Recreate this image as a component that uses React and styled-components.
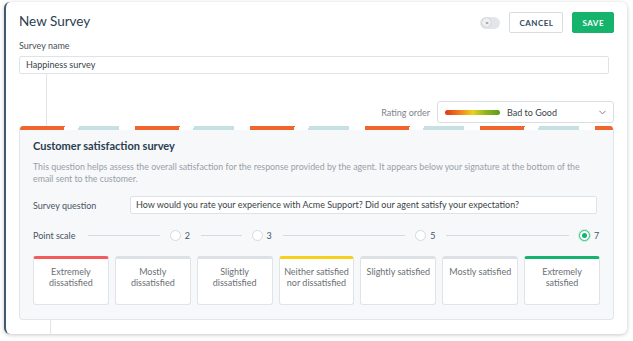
import React from 'react';
import styled, { createGlobalStyle } from 'styled-components';

const GlobalStyle = createGlobalStyle`
    body {
        margin: 0;
        background: #fff;
        font-family: Lato, "Open Sans", sans-serif;
    }
`;

const scale = [
    { label: 'Extremely dissatisfied', color: '#f45b5b' },
    { label: 'Mostly dissatisfied', color: '#dde1e6' },
    { label: 'Slightly dissatisfied', color: '#dde1e6' },
    { label: 'Neither satisfied nor dissatisfied', color: '#f7cf1d' },
    { label: 'Slightly satisfied', color: '#dde1e6' },
    { label: 'Mostly satisfied', color: '#dde1e6' },
    { label: 'Extremely satisfied', color: '#14b46e' },
];

const points = [
    { value: 2, span: 2, withLabel: true },
    { value: 3, span: 1 },
    { value: 5, span: 2 },
    { value: 7, span: 2, checked: true },
];

function App() {
    return (
        <Page>
            <GlobalStyle />
            <Panel>
                <Header>
                    <Title>New Survey</Title>
                    <Actions>
                        <Toggle>
                            <Knob>×</Knob>
                        </Toggle>
                        <Button>CANCEL</Button>
                        <Button primary>SAVE</Button>
                    </Actions>
                </Header>

                <FieldLabel>Survey name</FieldLabel>
                <NameInput>Happiness survey</NameInput>

                <Branch>
                    <RatingLabel>Rating order</RatingLabel>
                    <Select>
                        <GradientBar />
                        <SelectText>Bad to Good</SelectText>
                        <Chevron viewBox="0 0 10 6">
                            <path d="M1 1l4 4 4-4" fill="none" stroke="#6b7785" strokeWidth="1.3" strokeLinecap="round" strokeLinejoin="round" />
                        </Chevron>
                    </Select>
                </Branch>

                <Card>
                    <Stripes />
                    <CardBody>
                        <CardTitle>Customer satisfaction survey</CardTitle>
                        <Description>
                            This question helps assess the overall satisfaction for the response provided by the agent. It appears below your signature at the bottom of the email sent to the customer.
                        </Description>

                        <QuestionRow>
                            <RowLabel>Survey question</RowLabel>
                            <QuestionInput>How would you rate your experience with Acme Support? Did our agent satisfy your expectation?</QuestionInput>
                        </QuestionRow>

                        <ScaleGrid>
                            {points.map((p) => (
                                <ScaleCell key={p.value} span={p.span}>
                                    {p.withLabel && <RowLabel>Point scale</RowLabel>}
                                    <Line first={p.withLabel} />
                                    <Radio checked={p.checked} />
                                    <PointNum>{p.value}</PointNum>
                                </ScaleCell>
                            ))}
                        </ScaleGrid>

                        <OptionGrid>
                            {scale.map((s) => (
                                <Option key={s.label} accent={s.color}>{s.label}</Option>
                            ))}
                        </OptionGrid>
                    </CardBody>
                </Card>

                <BottomBranch />
            </Panel>
        </Page>
    );
}

const Page = styled.div`
    padding: 2px 6px 7px 4px;
`;

const Panel = styled.div`
    height: 332px;
    box-sizing: border-box;
    background: #fff;
    border-radius: 6px;
    border-left: 2px solid #40596f;
    box-shadow: 0 1px 4px rgba(0, 0, 0, 0.22);
    padding: 10px 13px 0 13px;
    overflow: hidden;
`;

const Header = styled.div`
    display: flex;
    justify-content: space-between;
    align-items: flex-start;
    height: 28px;
`;

const Title = styled.h1`
    margin: 1px 0 0;
    font-size: 13.5px;
    font-weight: 400;
    color: #2b3d50;
    line-height: 17px;
`;

const Actions = styled.div`
    display: flex;
    align-items: center;
`;

const Toggle = styled.div`
    width: 20px;
    height: 12px;
    border-radius: 6px;
    background: #e2e5e9;
    display: flex;
    align-items: center;
    padding-left: 2px;
    box-sizing: border-box;
    margin-right: 9px;
`;

const Knob = styled.div`
    width: 9px;
    height: 9px;
    border-radius: 50%;
    background: #eef0f2;
    box-shadow: 0 0 1px rgba(0, 0, 0, 0.35);
    font-size: 6px;
    line-height: 9px;
    text-align: center;
    color: #555;
`;

const Button = styled.button`
    height: 21px;
    padding: 0 9px;
    margin-left: ${(p) => (p.primary ? '9px' : '0')};
    border: 1px solid ${(p) => (p.primary ? '#15b36c' : '#d7dce1')};
    border-radius: 2px;
    background: ${(p) => (p.primary ? '#15b36c' : '#fff')};
    color: ${(p) => (p.primary ? '#fff' : '#34495e')};
    font-family: Lato, sans-serif;
    font-size: 8px;
    font-weight: 700;
    letter-spacing: 0.5px;
`;

const FieldLabel = styled.div`
    font-size: 9px;
    color: #4a4f55;
    line-height: 12px;
`;

const NameInput = styled.div`
    margin-top: 4px;
    margin-right: 5px;
    height: 18px;
    box-sizing: border-box;
    border: 1px solid #dfe3e7;
    border-radius: 2px;
    padding: 0 6px;
    font-size: 9px;
    line-height: 16px;
    color: #3a3f45;
`;

const Branch = styled.div`
    margin-left: 27px;
    border-left: 1px solid #e1e4e8;
    padding: 27px 0 3px;
    display: flex;
    justify-content: flex-end;
    align-items: center;
`;

const RatingLabel = styled.span`
    font-size: 9px;
    color: #80858b;
    margin-right: 7px;
`;

const Select = styled.div`
    width: 177px;
    height: 22px;
    box-sizing: border-box;
    border: 1px solid #d9dee3;
    border-radius: 3px;
    display: flex;
    align-items: center;
    padding: 0 7px;
`;

const GradientBar = styled.div`
    width: 55px;
    height: 5px;
    border-radius: 3px;
    background: linear-gradient(90deg, #e2361a 0%, #f08a1c 30%, #ecd21c 50%, #8cb41e 75%, #5a9c1a 100%);
`;

const SelectText = styled.span`
    font-size: 9px;
    color: #3a3f45;
    margin-left: 7px;
    flex: 1;
`;

const Chevron = styled.svg`
    width: 7px;
    height: 5px;
`;

const Card = styled.div`
    border: 1px solid #e2e6ea;
    border-top: none;
    border-radius: 4px;
    background: #f6f8fa;
    overflow: hidden;
`;

const Stripes = styled.div`
    height: 4px;
    background-image: linear-gradient(100deg, #f0652d 0, #f0652d 44px, #fff 44px, #fff 58px, #c6e0e3 58px, #c6e0e3 98px, #fff 98px, #fff 115px);
    background-size: 115px 4px;
    background-repeat: repeat-x;
`;

const CardBody = styled.div`
    padding: 8px 13px 14px;
`;

const CardTitle = styled.h2`
    margin: 0;
    font-size: 11px;
    font-weight: 700;
    color: #2b3d50;
    line-height: 16px;
`;

const Description = styled.p`
    margin: 7px 0 0;
    font-size: 8.8px;
    line-height: 11.5px;
    color: #9aa0a6;
`;

const QuestionRow = styled.div`
    display: flex;
    align-items: center;
    margin-top: 12px;
    padding-right: 3px;
`;

const RowLabel = styled.span`
    font-size: 9px;
    color: #4a5563;
    width: 97px;
    flex-shrink: 0;
`;

const QuestionInput = styled.div`
    flex: 1;
    height: 18px;
    box-sizing: border-box;
    border: 1px solid #dfe3e7;
    border-radius: 2px;
    background: #fff;
    padding: 0 5px;
    font-size: 9px;
    line-height: 16px;
    color: #3a3f45;
    white-space: nowrap;
    overflow: hidden;
`;

const ScaleGrid = styled.div`
    display: grid;
    grid-template-columns: repeat(7, 1fr);
    column-gap: 6px;
    margin-top: 15px;
    height: 12px;
`;

const ScaleCell = styled.div`
    grid-column: span ${(p) => p.span};
    display: flex;
    align-items: center;

    & > ${RowLabel} {
        width: auto;
    }
`;

const Line = styled.div`
    flex: 1;
    height: 1px;
    background: #d5dadf;
    margin: 0 10px 0 ${(p) => (p.first ? '13px' : '4px')};
`;

const Radio = styled.span`
    width: 11px;
    height: 11px;
    box-sizing: border-box;
    border-radius: 50%;
    border: 1px solid ${(p) => (p.checked ? '#2fbf7f' : '#d5dadf')};
    background: #fff;
    display: flex;
    align-items: center;
    justify-content: center;
    box-shadow: ${(p) => (p.checked ? '0 0 0 1px #c8eedb' : 'none')};

    &::after {
        content: '';
        width: 5px;
        height: 5px;
        border-radius: 50%;
        background: ${(p) => (p.checked ? '#14b46e' : 'transparent')};
    }
`;

const PointNum = styled.span`
    font-size: 9px;
    color: #4a5563;
    margin-left: 4px;
    width: 6px;
`;

const OptionGrid = styled.div`
    display: grid;
    grid-template-columns: repeat(7, 1fr);
    column-gap: 6px;
    margin-top: 15px;
`;

const Option = styled.div`
    height: 49px;
    box-sizing: border-box;
    background: #fff;
    border: 1px solid #e0e4e8;
    border-top: 3px solid ${(p) => p.accent};
    border-radius: 3px;
    padding: 7px 3px 0;
    text-align: center;
    font-size: 9px;
    line-height: 11px;
    color: #6b6f74;
`;

const BottomBranch = styled.div`
    margin-left: 31px;
    border-left: 1px solid #e1e4e8;
    height: 20px;
`;

export default App;
